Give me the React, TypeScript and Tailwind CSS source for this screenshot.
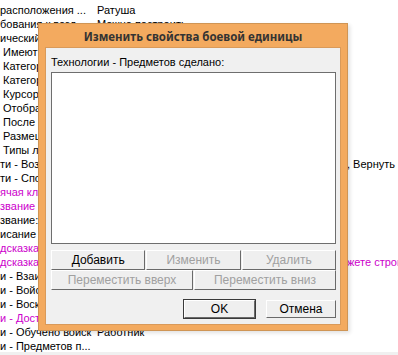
const rows: { a: string; b?: string; c?: string; indent?: boolean; pink?: boolean; pinkC?: boolean }[] = [
  { a: "расположения ...", b: "Ратуша" },
  { a: "бования к возд...", b: "Можно построить" },
  { a: "ический" },
  { a: "Имеют отношение", indent: true },
  { a: "Категория", indent: true },
  { a: "Категория", indent: true },
  { a: "Курсор", indent: true },
  { a: "Отображение", indent: true },
  { a: "После смерти", indent: true },
  { a: "Размещение", indent: true },
  { a: "Типы ландшафта", indent: true },
  { a: "ти - Возможности", c: ", Вернуть" },
  { a: "ти - Способности" },
  { a: "ячая клавиша", pink: true },
  { a: "звание", pink: true },
  { a: "звание:" },
  { a: "исание" },
  { a: "дсказка", pink: true },
  { a: "дсказка", pink: true, c: "жете строку", pinkC: true },
  { a: "и - Взаимодействие" },
  { a: "и - Войска" },
  { a: "и - Воскрешение" },
  { a: "и - Доступно", pink: true },
  { a: "и - Обучено войск", b: "Работник" },
  { a: "и - Предметов п..." },
];

function Btn({ label, disabled, def }: { label: string; disabled?: boolean; def?: boolean }) {
  return (
    <div
      className={`h-full flex items-center justify-center bg-[#efefef] border border-t-white border-l-white border-r-[#6a6a6a] border-b-[#6a6a6a] text-[12px] ${
        disabled ? "text-[#a0a0a0]" : "text-black"
      } ${def ? "outline outline-1 outline-[#3a3a3a]" : ""}`}
    >
      {label}
    </div>
  );
}

export default function App() {
  return (
    <div className="relative w-[398px] h-[355px] overflow-hidden bg-white" style={{ fontFamily: '"Liberation Sans", Arial, sans-serif' }}>
      {/* background list */}
      <div className="pt-[3px] text-[11px] leading-[14px] text-black">
        {rows.map((r, i) => (
          <div key={i} className="flex whitespace-nowrap h-[14px]">
            <div className={`w-[97px] shrink-0 overflow-hidden ${r.indent ? "pl-[3px]" : ""} ${r.pink ? "text-[#cc00cc]" : ""}`}>{r.a}</div>
            <div className="w-[250px] shrink-0 overflow-hidden">{r.b}</div>
            <div className={`${r.pinkC ? "text-[#cc00cc]" : ""}`}>{r.c}</div>
          </div>
        ))}
      </div>
      <div className="absolute bottom-0 left-0 right-0 h-[3px] bg-[#f0f0f0]" />

      {/* dialog */}
      <div className="absolute left-[38px] top-[23px] w-[310px] h-[308px] bg-[#f3aa5f] border border-[#cf9555] shadow-[2px_2px_4px_rgba(0,0,0,0.12)] flex flex-col px-[6px] pb-[5px]">
        <div
          className="h-[23px] shrink-0 flex items-center justify-center pt-[2px] text-[11.5px] font-bold text-[#333]"
          style={{ fontFamily: '"Noto Sans", "Open Sans", sans-serif' }}
        >
          Изменить свойства боевой единицы
        </div>
        <div className="flex-1 bg-[#f0f0f0] border border-[#d99a5a] flex flex-col pl-[5px] pr-[4px]">
          <div className="pt-[7px] h-[24px] text-[11px] leading-[14px] text-black">Технологии - Предметов сделано:</div>
          <div className="h-[172px] bg-white border border-[#6e6e6e]" />
          <div className="mt-[6px] h-[20px] grid grid-cols-3 gap-[1px]">
            <Btn label="Добавить" />
            <Btn label="Изменить" disabled />
            <Btn label="Удалить" disabled />
          </div>
          <div className="h-[20px] grid grid-cols-2 gap-[1px]">
            <Btn label="Переместить вверх" disabled />
            <Btn label="Переместить вниз" disabled />
          </div>
          <div className="mt-[10px] h-[18px] flex justify-end gap-[11px]">
            <div className="w-[71px] h-full">
              <Btn label="OK" def />
            </div>
            <div className="w-[70px] h-full">
              <Btn label="Отмена" />
            </div>
          </div>
        </div>
      </div>
    </div>
  );
}
